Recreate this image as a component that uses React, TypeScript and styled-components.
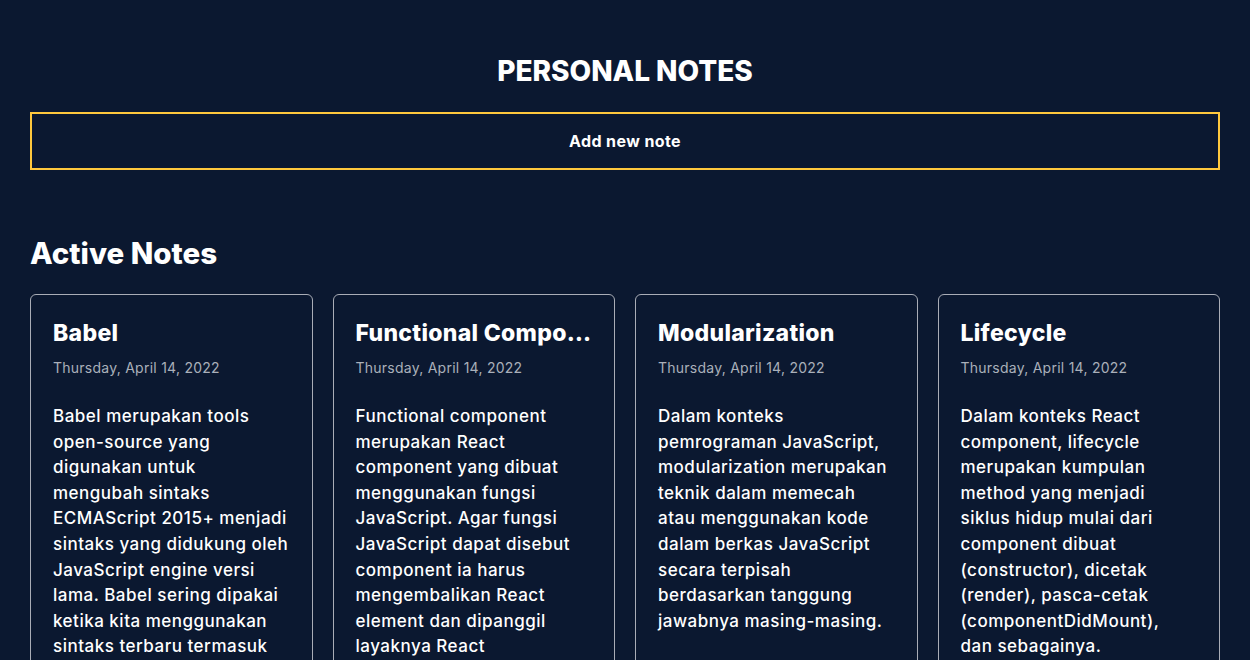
import React from "react";
import styled, { createGlobalStyle } from "styled-components";

const GlobalStyle = createGlobalStyle`
  * { box-sizing: border-box; }
  html, body {
    margin: 0;
    padding: 0;
    background: #0b1830;
    color: #ffffff;
    font-family: Inter, "Open Sans", sans-serif;
  }
`;

const Page = styled.div`
  min-height: 100vh;
  background: #0b1830;
  padding: 0 30px 40px;
`;

const Header = styled.header`
  display: flex;
  flex-direction: column;
  align-items: stretch;
  padding-top: 54px;
`;

const Title = styled.h1`
  margin: 0;
  text-align: center;
  font-size: 28px;
  line-height: 34px;
  font-weight: 800;
  letter-spacing: 0;
`;

const AddButton = styled.button`
  margin-top: 24px;
  height: 58px;
  background: transparent;
  border: 2px solid #ffc83d;
  color: #ffffff;
  font-family: inherit;
  font-size: 16px;
  font-weight: 700;
  letter-spacing: 0.4px;
  padding-bottom: 2px;
  cursor: pointer;
`;

const Section = styled.section`
  margin-top: 63px;
`;

const SectionTitle = styled.h2`
  margin: 0 0 21px;
  font-size: 29.5px;
  line-height: 40px;
  font-weight: 800;
`;

const Grid = styled.div`
  display: grid;
  grid-template-columns: repeat(4, 1fr);
  gap: 20px;
`;

const Card = styled.article`
  border: 1px solid #a9adb6;
  border-radius: 6px;
  padding: 23px 22px 24px;
  min-width: 0;
`;

const CardTitle = styled.h3`
  margin: 0;
  font-size: 23px;
  line-height: 30px;
  font-weight: 800;
  letter-spacing: 0.3px;
  white-space: nowrap;
  overflow: hidden;
  text-overflow: ellipsis;
`;

const CardDate = styled.p`
  margin: 10px 0 0;
  font-size: 14px;
  line-height: 20px;
  letter-spacing: 0.25px;
  color: #aab0ba;
`;

const CardBody = styled.p`
  margin: 26px 0 0;
  font-size: 17px;
  line-height: 25.6px;
  font-weight: 500;
  letter-spacing: 0.5px;
  color: #ffffff;
`;

const notes = [
  {
    title: "Babel",
    body: "Babel merupakan tools open-source yang digunakan untuk mengubah sintaks ECMAScript 2015+ menjadi sintaks yang didukung oleh JavaScript engine versi lama. Babel sering dipakai ketika kita menggunakan sintaks terbaru termasuk sintaks JSX.",
  },
  {
    title: "Functional Component",
    body: "Functional component merupakan React component yang dibuat menggunakan fungsi JavaScript. Agar fungsi JavaScript dapat disebut component ia harus mengembalikan React element dan dipanggil layaknya React component.",
  },
  {
    title: "Modularization",
    body: "Dalam konteks pemrograman JavaScript, modularization merupakan teknik dalam memecah atau menggunakan kode dalam berkas JavaScript secara terpisah berdasarkan tanggung jawabnya masing-masing.",
  },
  {
    title: "Lifecycle",
    body: "Dalam konteks React component, lifecycle merupakan kumpulan method yang menjadi siklus hidup mulai dari component dibuat (constructor), dicetak (render), pasca-cetak (componentDidMount), dan\u00A0sebagainya.",
  },
];

export default function App() {
  return (
    <>
      <GlobalStyle />
      <Page>
        <Header>
          <Title>PERSONAL NOTES</Title>
          <AddButton type="button">Add new note</AddButton>
        </Header>
        <Section>
          <SectionTitle>Active Notes</SectionTitle>
          <Grid>
            {notes.map((n) => (
              <Card key={n.title}>
                <CardTitle>{n.title}</CardTitle>
                <CardDate>Thursday, April 14, 2022</CardDate>
                <CardBody>{n.body}</CardBody>
              </Card>
            ))}
          </Grid>
        </Section>
      </Page>
    </>
  );
}
